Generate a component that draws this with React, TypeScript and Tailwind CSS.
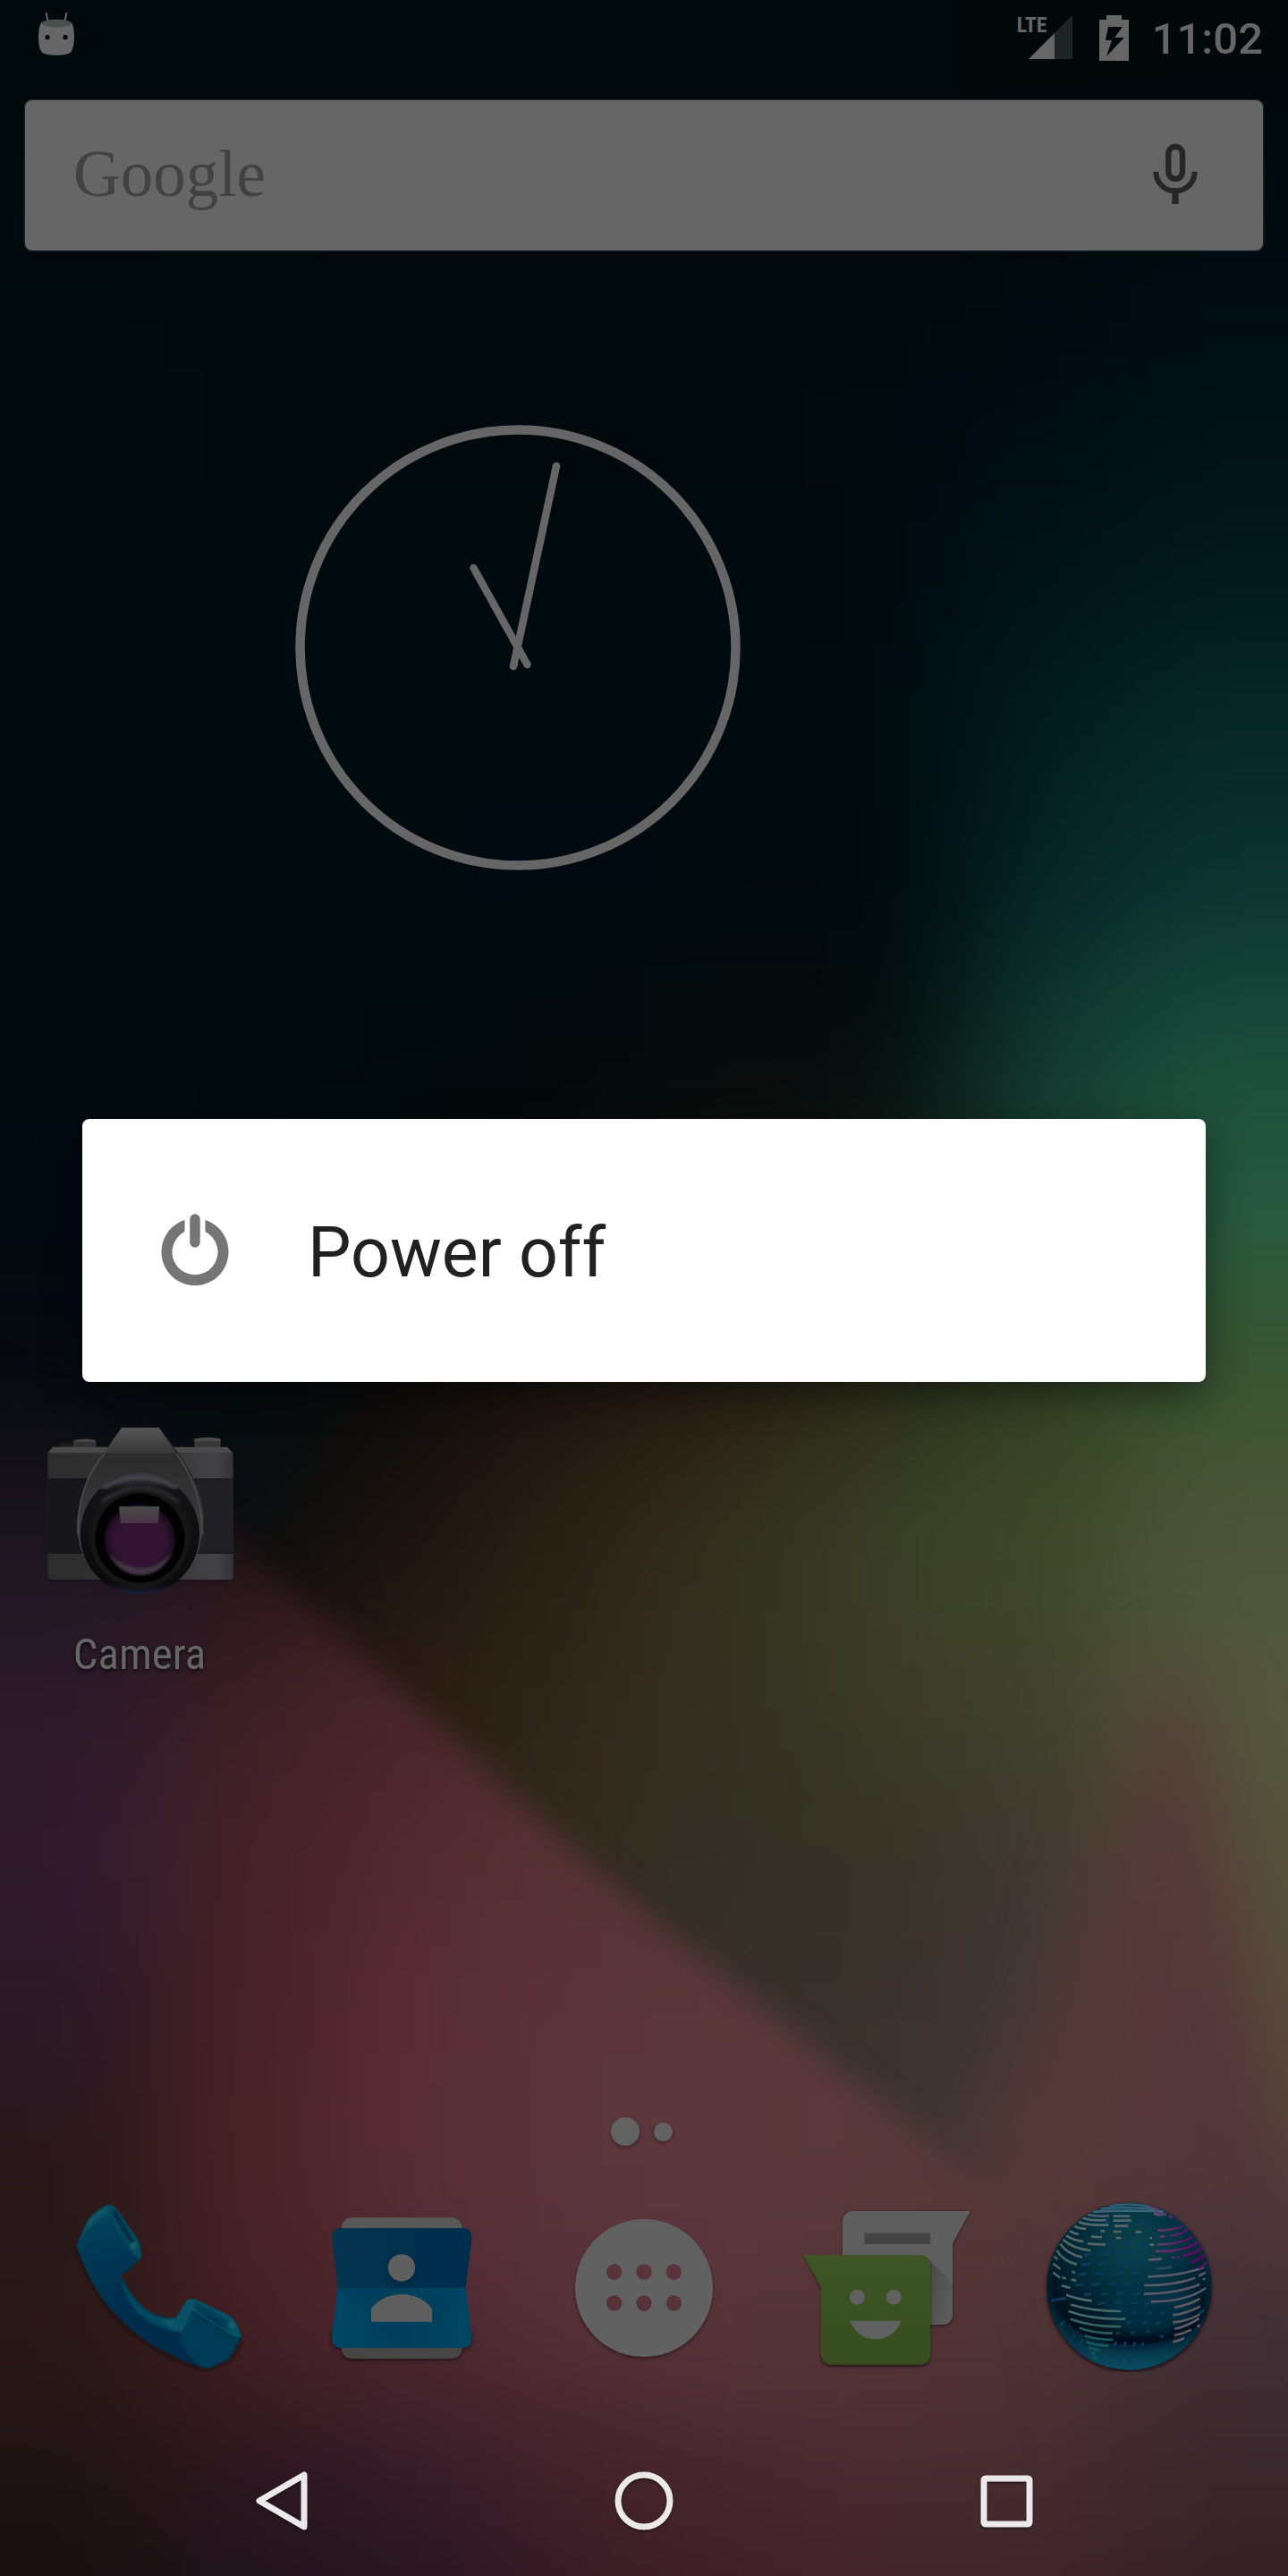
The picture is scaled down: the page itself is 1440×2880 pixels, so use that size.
import React from "react";

const CELL = 180;

/* Colour fields of the wallpaper: one row per 180 units, eight columns. */
const NIGHT_FIELD = [
  ["#00090b", "#00090b", "#00090b", "#00090b", "#00090b", "#00090b", "#00080a", "#00080a"],
  ["#000a0e", "#000a0d", "#00090c", "#00090b", "#00090b", "#00090c", "#000a0e", "#000b10"],
  ["#000b10", "#000a0e", "#000a0e", "#000a0d", "#000a0e", "#000a0f", "#000b12", "#010f16"],
  ["#000b10", "#000b0f", "#000b0f", "#000b0f", "#000b0f", "#000a0e", "#011217", "#03191d"],
  ["#000b10", "#000b10", "#000b0f", "#000b0f", "#000b0f", "#000a0e", "#031d20", "#062728"],
  ["#000b10", "#000b10", "#000b10", "#000a10", "#000a0f", "#00090c", "#062626", "#0c3430"],
  ["#000b10", "#000b10", "#000a0e", "#020a0c", "#050b0b", "#040b0c", "#113a31", "#1b4c3b"],
  ["#000a10", "#000a0e", "#030a0b", "#0a0b0b", "#11110e", "#131c14", "#1e4331", "#275a40"],
  ["#06090f", "#010a0c", "#0c0a0a", "#1d120e", "#261b12", "#2c2d1a", "#2f3f22", "#39532f"],
  ["#1a1420", "#080c0e", "#1c130e", "#2a2015", "#33301f", "#3a3f27", "#3f482a", "#4b553a"],
  ["#1a1420", "#20140f", "#291b13", "#2f2619", "#343122", "#3a3b27", "#41422d", "#55583f"],
  ["#2a2018", "#2a2018", "#2b2017", "#31291e", "#343026", "#373327", "#3f3832", "#55523b"],
  ["#2a2018", "#2a2018", "#2b2017", "#352c25", "#38302b", "#39322c", "#433634", "#554b3b"],
  ["#2a2018", "#2a2018", "#2b2017", "#352c25", "#3c332f", "#3f352f", "#4a3936", "#544638"],
  ["#2a2018", "#2a2018", "#2b2017", "#352c25", "#453735", "#4a3634", "#4a3435", "#3c3035"],
  ["#1a1114", "#20141c", "#25151d", "#381b24", "#42222a", "#452a2e", "#432a2e", "#35252a"],
  ["#170e10", "#1b1118", "#20141c", "#321922", "#3b1b23", "#3d2025", "#3a1e24", "#2f1b20"],
];

const ROSE_FIELD = [
  ["#06090f", "#010a0c", "#0c0a0a", "#1d120e", "#261b12", "#2c2d1a", "#43412f", "#4a4a34"],
  ["#1b151f", "#1c1114", "#321a19", "#3a2320", "#3a2a20", "#443b2d", "#474130", "#4e4b38"],
  ["#2b1a2a", "#3b1f24", "#48252a", "#4c2b2c", "#4c302c", "#4c3a34", "#4b3d33", "#534439"],
  ["#311c30", "#432126", "#53292f", "#563234", "#553436", "#553a36", "#503735", "#563c3a"],
  ["#2a1926", "#472124", "#592b34", "#5b343b", "#5b373a", "#5a393b", "#553836", "#56383a"],
  ["#271719", "#4a2224", "#582d36", "#5b363d", "#5c393d", "#5a393b", "#573937", "#52363a"],
  ["#281816", "#421f24", "#4c2631", "#552f38", "#56343a", "#533437", "#4e3234", "#403036"],
  ["#1d1212", "#27161e", "#301a24", "#3e1f29", "#45252d", "#482a2f", "#462a2f", "#38262b"],
  ["#170e10", "#1b1118", "#20141c", "#321922", "#3b1b23", "#3d2025", "#3a1e24", "#2f1b20"],
];

function ColourField({ rows, firstRow }: { rows: string[][]; firstRow: number }) {
  return (
    <g filter="url(#field-blur)">
      {rows.map((row, r) =>
        row.map((fill, c) => {
          const left = c === 0 ? -400 : c * CELL;
          const right = c === row.length - 1 ? 1840 : (c + 1) * CELL + 1;
          const top = firstRow + r === 0 ? -400 : (firstRow + r) * CELL;
          const bottom = r === rows.length - 1 ? 3400 : (firstRow + r + 1) * CELL + 1;
          return <rect key={`${r}-${c}`} x={left} y={top} width={right - left} height={bottom - top} fill={fill} />;
        })
      )}
    </g>
  );
}

function Wallpaper() {
  return (
    <svg
      aria-hidden="true"
      className="absolute inset-0 h-full w-full"
      viewBox="0 0 1440 2880"
      preserveAspectRatio="none"
    >
      <defs>
        <filter id="field-blur" filterUnits="userSpaceOnUse" x="-400" y="-400" width="2240" height="3800" colorInterpolationFilters="sRGB">
          <feGaussianBlur stdDeviation="75" />
        </filter>
        <filter id="edge-blur" filterUnits="userSpaceOnUse" x="-600" y="600" width="2640" height="2900">
          <feGaussianBlur stdDeviation="16" />
        </filter>
        <filter id="soft-edge-blur" filterUnits="userSpaceOnUse" x="-600" y="600" width="2640" height="2900">
          <feGaussianBlur stdDeviation="38" />
        </filter>
        <mask id="rose-mask" maskUnits="userSpaceOnUse" x="-400" y="1000" width="2240" height="2200">
          <polygon filter="url(#edge-blur)" fill="#fff" points="-500,1300 40,1560 230,1690 700,2120 1130,2470 1200,3300 -500,3300" />
          <polygon filter="url(#soft-edge-blur)" fill="#fff" points="1080,2500 1170,2280 1300,1830 1350,1900 1425,2380 1560,2800 1560,3300 1080,3300" />
        </mask>
      </defs>
      <ColourField rows={NIGHT_FIELD} firstRow={0} />
      <g mask="url(#rose-mask)">
        <ColourField rows={ROSE_FIELD} firstRow={8} />
      </g>
    </svg>
  );
}

function StatusBar() {
  return (
    <header className="flex h-[84px] items-center justify-between pl-[42px] pr-[28px] text-[#666666]">
      <svg className="mb-[8px] h-[50px] w-[42px]" viewBox="126 40 126 150" role="img" aria-label="Android debugging">
        <path d="M155 46 L161 74 M223 46 L217 74" stroke="#666" strokeWidth="6" strokeLinecap="round" />
        <path d="M139 76 Q189 56 239 76 Q249 90 249 126 Q248 160 239 174 Q230 186 189 186 Q148 186 139 174 Q129 160 129 126 Q129 90 139 76Z" fill="#666" />
        <ellipse cx="189" cy="79" rx="50" ry="13" fill="#4d4f4f" />
        <circle cx="159" cy="126" r="8" fill="#00090b" />
        <circle cx="219" cy="126" r="8" fill="#00090b" />
      </svg>
      <div className="flex items-center">
        <div className="relative h-[50px] w-[60px]">
          <span className="absolute -left-[2px] -top-px font-['Roboto_Condensed','Liberation_Sans_Narrow','Roboto',sans-serif] text-[24px] font-bold leading-[24px]">
            LTE
          </span>
          <svg className="ml-auto h-[50px] w-[49px]" viewBox="0 0 49 50" role="img" aria-label="Mobile signal">
            <path d="M49 0V49H29V20Z" fill="#1f2527" />
            <path d="M29 20V49H0Z" fill="#666" />
          </svg>
        </div>
        <svg className="ml-[30px] h-[51px] w-[33px]" viewBox="0 0 33 51" role="img" aria-label="Battery charging">
          <path fillRule="evenodd" fill="#666" d="M8 0H25V5H33V51H0V5H8ZM10 13L7 28H14L8 46L28 25H17L26 13Z" />
        </svg>
        <time className="ml-[26px] pt-[4px] font-['Roboto',sans-serif] text-[49px] font-medium leading-[56px]">11:02</time>
      </div>
    </header>
  );
}

function SearchBar() {
  return (
    <div className="mx-[28px] mt-[28px] flex h-[168px] items-center justify-between rounded-[8px] bg-[#666666] shadow-[0_0_2px_1px_rgba(60,66,68,0.5)]">
      <button
        type="button"
        aria-label="Google search"
        className="h-full flex-1 pb-[2px] pl-[54px] text-left font-['Liberation_Serif',serif] text-[73px] leading-[80px] text-[#424242]"
      >
        Google
      </button>
      <button type="button" aria-label="Voice search" className="mr-[66px] flex h-full items-center px-[6px] pb-[4px]">
        <svg className="h-[68px] w-[52px]" viewBox="624 480 156 204" fill="none" stroke="#262626">
          <rect x="679" y="492" width="47" height="108" rx="23.5" strokeWidth="19" />
          <path d="M637 576C637 613 666 640 702 640S767 613 767 576" strokeWidth="18" />
          <path d="M702 640V684" strokeWidth="22" />
        </svg>
      </button>
    </div>
  );
}

function ClockWidget() {
  return (
    <svg className="ml-[329px] mt-[194px] h-[500px] w-[500px]" viewBox="0 0 500 500" role="img" aria-label="Clock, 11:02" fill="none" stroke="#666" strokeLinecap="round">
      <circle cx="250" cy="250" r="243.5" strokeWidth="10.5" />
      <path d="M245 271L293 47" strokeWidth="8.5" />
      <path d="M260.5 269L200.5 161" strokeWidth="8.5" />
    </svg>
  );
}

function CameraIcon() {
  return (
    <svg className="h-[193px] w-[213px]" viewBox="150 100 639 579" aria-hidden="true">
      <defs>
        <linearGradient id="cam-top" x1="0" y1="0" x2="0" y2="1">
          <stop offset="0" stopColor="#565656" />
          <stop offset="1" stopColor="#373737" />
        </linearGradient>
        <linearGradient id="cam-body" x1="0" y1="0" x2="1" y2="0">
          <stop offset="0" stopColor="#2c2c2c" />
          <stop offset="0.6" stopColor="#343436" />
          <stop offset="0.9" stopColor="#434346" />
          <stop offset="1" stopColor="#333335" />
        </linearGradient>
        <linearGradient id="cam-ridge" x1="0" y1="0" x2="0" y2="1">
          <stop offset="0" stopColor="#262626" />
          <stop offset="0.35" stopColor="#2e2e2e" />
          <stop offset="1" stopColor="#444444" />
        </linearGradient>
        <linearGradient id="cam-ring" x1="0" y1="0" x2="0" y2="1">
          <stop offset="0" stopColor="#3c3c42" />
          <stop offset="0.14" stopColor="#141416" />
          <stop offset="0.9" stopColor="#0a0a0b" />
          <stop offset="1" stopColor="#1c1f38" />
        </linearGradient>
        <radialGradient id="cam-glass">
          <stop offset="0" stopColor="#351332" />
          <stop offset="0.75" stopColor="#311431" />
          <stop offset="1" stopColor="#150a18" />
        </radialGradient>
        <linearGradient id="cam-flash" x1="0" y1="0" x2="0" y2="1">
          <stop offset="0" stopColor="#4a4a48" />
          <stop offset="1" stopColor="#4a3448" />
        </linearGradient>
        <filter id="cam-soft"><feGaussianBlur stdDeviation="5" /></filter>
      </defs>
      <rect x="165" y="590" width="610" height="34" rx="10" fill="#08060c" opacity="0.5" filter="url(#cam-soft)" />
      <path d="M200 165Q222 152 245 165V190H200Z" fill="#1c1c1c" />
      <path d="M245 152Q283 142 322 152V190H245Z" fill="#333" />
      <path d="M252 151Q283 144 318 151V157H252Z" fill="#434343" />
      <path d="M652 147Q696 137 740 147V185H652Z" fill="#363636" />
      <path d="M652 147Q696 137 740 147V155H652Z" fill="#4a4a4a" />
      <path d="M178 176H762L782 196V612Q780 620 766 620H172Q160 618 160 606V196Z" fill="url(#cam-body)" />
      <path d="M178 174H762L780 194H160Z" fill="#4a4a4a" />
      <rect x="160" y="282" width="621" height="248" fill="#17171a" />
      <rect x="660" y="282" width="121" height="248" fill="#212025" />
      <path d="M160 530H781M160 282H781" stroke="#101012" strokeWidth="3" />
      <path d="M408 110H534L572 160Q668 270 682 400Q684 470 660 540H280Q250 470 260 400Q280 270 350 200L370 165Z" fill="url(#cam-ridge)" />
      <path d="M408 110H534L590 196H348Q366 172 378 150Z" fill="url(#cam-top)" />
      <path d="M350 198Q258 300 262 470M592 198Q676 310 680 470" fill="none" stroke="#4a4a4a" strokeWidth="5" />
      <ellipse cx="469" cy="466" rx="200" ry="204" fill="url(#cam-ring)" />
      <path d="M345 312Q469 240 593 312" fill="none" stroke="#44444c" strokeWidth="14" filter="url(#cam-soft)" />
      <circle cx="470" cy="472" r="170" fill="#151515" />
      <path d="M340 360Q469 262 600 360" fill="none" stroke="#2b2b2e" strokeWidth="12" filter="url(#cam-soft)" />
      <circle cx="469" cy="480" r="150" fill="#020202" />
      <path d="M304 500A166 166 0 0 0 634 500A166 150 0 0 1 304 500Z" fill="#151515" />
      <circle cx="469" cy="485" r="119" fill="url(#cam-glass)" />
      <path d="M366 530Q400 606 480 604Q550 596 578 522Q540 575 480 580Q410 580 366 530Z" fill="#4b3f4e" opacity="0.8" filter="url(#cam-soft)" />
      <path d="M399 374H535L530 430H405Z" fill="url(#cam-flash)" />
    </svg>
  );
}

function PhoneIcon() {
  return (
    <svg className="h-[192px] w-[192px]" viewBox="69 60 576 576" aria-hidden="true">
      <defs>
        <linearGradient id="ph-body" x1="0.1" y1="0.1" x2="0.6" y2="1">
          <stop offset="0" stopColor="#004058" />
          <stop offset="0.5" stopColor="#002e4c" />
          <stop offset="1" stopColor="#002a48" />
        </linearGradient>
        <linearGradient id="ph-ear" x1="0" y1="0" x2="0.2" y2="1">
          <stop offset="0" stopColor="#00465c" />
          <stop offset="1" stopColor="#003350" />
        </linearGradient>
        <filter id="ph-shadow" x="-10%" y="-10%" width="120%" height="120%"><feGaussianBlur stdDeviation="5" /></filter>
        <filter id="ph-soft"><feGaussianBlur stdDeviation="4" /></filter>
      </defs>
      <path d="M79 216Q150 400 240 480Q350 580 508 630L590 600L636 530" fill="none" stroke="#140a0c" strokeWidth="10" opacity="0.7" filter="url(#ph-shadow)" />
      <path d="M79 212L120 125Q150 92 186 75Q200 73 212 84L284 190Q302 226 294 258L228 312Q256 380 310 425Q350 455 412 456L445 402Q460 384 482 393L590 446Q618 466 632 520L590 592L520 624Q480 622 350 555Q220 475 150 365Q112 306 79 212Z" fill="url(#ph-body)" />
      <path d="M79 212L120 125Q150 92 186 75L192 104L262 222Q280 255 262 290L228 312Q170 320 130 290Q98 255 79 212Z" fill="url(#ph-ear)" />
      <path d="M88 196L120 125Q150 92 186 75L190 98Q140 122 122 150Z" fill="#0a5464" filter="url(#ph-soft)" />
      <path d="M124 150Q150 122 190 104L262 222" fill="none" stroke="#0d5968" strokeWidth="5" filter="url(#ph-soft)" />
      <path d="M188 78Q204 74 214 88L284 190Q302 226 294 258L270 240L192 106Z" fill="#064a5c" />
      <path d="M200 92Q210 92 220 108L268 190Q276 206 270 220L214 126Q200 106 200 92Z" fill="#02283f" filter="url(#ph-soft)" />
      <path d="M220 138L232 130M228 152L240 144M236 166L248 158M244 180L256 172" stroke="#083a4a" strokeWidth="4" />
      <circle cx="270" cy="212" r="12" fill="#14616f" filter="url(#ph-soft)" />
      <path d="M228 316Q256 384 312 428Q356 460 412 458L420 500Q330 488 280 430Q232 374 228 316Z" fill="#054a60" filter="url(#ph-soft)" />
      <path d="M362 458L412 458L418 500Q384 488 362 458Z" fill="#0a5668" filter="url(#ph-soft)" />
      <path d="M416 450L445 402Q460 384 470 395L466 430L430 505Q410 500 412 456Z" fill="#0a5064" />
      <path d="M462 432L610 522Q626 526 632 518L590 592L520 624Q450 600 424 520Z" fill="#003a54" filter="url(#ph-soft)" />
      <path d="M462 392Q472 388 482 393L590 446Q618 466 632 516Q626 526 606 516L466 430Z" fill="#075065" />
      <path d="M476 402L520 422L596 470L604 500L552 480L480 432Z" fill="#043d55" filter="url(#ph-soft)" />
      <path d="M516 442L526 460M530 448L540 468M544 456L554 476M558 464L568 484" stroke="#02304a" strokeWidth="5" />
      <circle cx="600" cy="480" r="13" fill="#176270" filter="url(#ph-soft)" />
      <path d="M464 396V432L432 498" fill="none" stroke="#0d6475" strokeWidth="5" filter="url(#ph-soft)" />
    </svg>
  );
}

function ContactsIcon() {
  return (
    <svg className="h-[192px] w-[192px]" viewBox="39 60 576 576" aria-hidden="true">
      <defs>
        <linearGradient id="ct-top" x1="0" y1="0" x2="1" y2="0">
          <stop offset="0" stopColor="#05344e" />
          <stop offset="1" stopColor="#002d4c" />
        </linearGradient>
        <linearGradient id="ct-bottom" x1="0" y1="0" x2="1" y2="0">
          <stop offset="0" stopColor="#004664" />
          <stop offset="0.5" stopColor="#00405c" />
          <stop offset="1" stopColor="#004562" />
        </linearGradient>
        <linearGradient id="ct-shade" x1="0" y1="0" x2="1" y2="0.4">
          <stop offset="0" stopColor="#003b56" stopOpacity="0.5" />
          <stop offset="1" stopColor="#003b56" stopOpacity="0" />
        </linearGradient>
        <filter id="ct-shadow" x="-10%" y="-10%" width="120%" height="125%"><feGaussianBlur stdDeviation="6" /></filter>
      </defs>
      <path d="M92 500H563V535Q560 560 530 562V570Q520 597 495 597H160Q134 597 126 570V562Q92 555 92 535Z" fill="#000" opacity="0.5" filter="url(#ct-shadow)" />
      <rect x="126" y="118" width="403" height="472" rx="34" fill="#595959" />
      <path d="M126 550H529Q529 590 495 590H160Q126 590 126 550Z" fill="#464646" />
      <path d="M120 153H536Q564 156 563 186L542 354H113L92 186Q92 156 120 153Z" fill="url(#ct-top)" />
      <path d="M113 354H542L563 522Q562 553 534 555H122Q92 552 92 522Z" fill="url(#ct-bottom)" />
      <path d="M113 354L305 555H500L542 354Z" fill="url(#ct-shade)" />
      <ellipse cx="328" cy="300" rx="54" ry="52" fill="#00223a" opacity="0.35" filter="url(#ct-shadow)" />
      <circle cx="327" cy="286" r="45.5" fill="#5f5f5f" />
      <path d="M225 467V424Q262 376 327 375Q394 376 429 424V467Z" fill="#5f5f5f" />
    </svg>
  );
}

function AppsIcon() {
  return (
    <svg className="h-[192px] w-[192px]" viewBox="12 330 576 576" aria-hidden="true">
      <defs>
        <filter id="ap-shadow" x="-10%" y="-10%" width="120%" height="120%"><feGaussianBlur stdDeviation="5" /></filter>
        <mask id="ap-holes">
          <rect x="12" y="330" width="576" height="576" fill="#fff" />
          {[570, 675].map((cy) => [200, 300, 400].map((cx) => <circle key={`${cx}-${cy}`} cx={cx} cy={cy} r="26" fill="#000" />))}
        </mask>
      </defs>
      <g mask="url(#ap-holes)">
        <circle cx="300" cy="630" r="231" fill="#14080c" opacity="0.5" filter="url(#ap-shadow)" />
        <circle cx="300" cy="624" r="231" fill="#616161" />
      </g>
    </svg>
  );
}

function MessagesIcon() {
  return (
    <svg className="h-[192px] w-[192px]" viewBox="45 60 576 576" aria-hidden="true">
      <defs>
        <linearGradient id="ms-green" x1="0" y1="0" x2="0" y2="1">
          <stop offset="0" stopColor="#3e5425" />
          <stop offset="0.4" stopColor="#3a5122" />
          <stop offset="1" stopColor="#384e1f" />
        </linearGradient>
        <linearGradient id="ms-fold" x1="0" y1="0" x2="1" y2="0.6">
          <stop offset="0" stopColor="#484848" />
          <stop offset="1" stopColor="#5c5c5c" />
        </linearGradient>
        <filter id="ms-shadow" x="-10%" y="-10%" width="120%" height="120%"><feGaussianBlur stdDeviation="5" /></filter>
      </defs>
      <path d="M186 130Q188 98 220 96H614L556 212V444Q552 484 520 484H186Z" fill="#000" opacity="0.4" filter="url(#ms-shadow)" />
      <path d="M186 132Q188 98 220 96H614L555 205V440Q552 476 520 477H186Z" fill="#5f5f5f" />
      <path d="M472 254L555 336V440Q552 476 520 477H472Z" fill="url(#ms-fold)" />
      <rect x="259" y="170" width="222" height="37" fill="#444" />
      <path d="M56 250H446Q480 252 481 282V582Q478 618 446 618H148Q116 616 113 582V356Z" fill="#000" opacity="0.5" filter="url(#ms-shadow)" />
      <path d="M53 243H446Q480 246 481 278V576Q478 610 446 611H148Q116 608 113 576V350Z" fill="url(#ms-green)" />
      <circle cx="235" cy="385" r="25.5" fill="#616161" />
      <circle cx="358" cy="385" r="25.5" fill="#616161" />
      <path d="M210 464H383Q356 525 297 526Q238 525 210 464Z" fill="#616161" />
    </svg>
  );
}

const OCEAN_DASHES: Array<[number, number, number]> = [
  [305, 207, 30], [360, 206, 30], [415, 210, 26], [230, 241, 30], [288, 240, 30], [348, 239, 32], [405, 238, 26],
  [222, 274, 30], [280, 272, 30], [342, 270, 30], [398, 270, 28], [210, 308, 28], [268, 306, 30], [330, 304, 30],
  [386, 303, 28], [200, 344, 28], [255, 341, 30], [310, 339, 30], [366, 338, 26], [228, 376, 24], [284, 374, 24],
  [338, 372, 24], [392, 374, 20], [276, 405, 24], [330, 403, 22], [382, 403, 22], [428, 407, 18], [384, 434, 14],
  [436, 438, 14], [480, 438, 14], [368, 468, 14], [420, 470, 14], [466, 470, 14], [330, 505, 14], [380, 504, 14],
  [430, 500, 12], [476, 516, 12],
];

const LAND_LINES: Array<[string, string]> = [
  ["M300 78Q367 68 440 80", "#315f78"],
  ["M272 88Q360 80 456 90", "#315f78"],
  ["M246 98Q360 92 482 98", "#3c657a"],
  ["M228 108Q262 116 300 112M314 113H370M450 104Q470 112 492 106", "#50616c"],
  ["M212 120Q244 130 290 126M314 128H374", "#54666e"],
  ["M198 132Q226 146 298 142M318 146H364", "#546769"],
  ["M184 146Q200 156 222 155M272 163H286M314 165H342M388 166H408", "#566665"],
  ["M168 162Q180 172 198 174M240 181Q256 184 276 183M322 186H340M436 186H444", "#566665"],
  ["M156 178Q180 194 214 198M228 205Q256 208 288 208M436 209H452", "#566665"],
  ["M146 192Q178 222 238 228", "#566665"],
  ["M136 206Q160 240 210 251", "#536661"],
  ["M124 228Q146 264 192 275", "#48625e"],
  ["M116 248L128 258M112 272L136 290M176 298L186 304M112 302L136 320M142 319L156 322M172 326L190 329", "#48625e"],
  ["M140 346L170 354M156 377Q196 392 242 397", "#4d6769"],
  ["M172 410Q250 432 340 432", "#446866"],
  ["M164 432Q240 460 355 458", "#446866"],
  ["M170 458Q250 486 340 483", "#356462"],
  ["M200 488Q254 506 312 506", "#205c59"],
  ["M218 514Q260 528 314 528M224 534Q256 548 298 547", "#1c5856"],
  ["M232 552Q252 564 270 562M240 570L254 576M244 584L262 592", "#0c5452"],
  ["M432 259Q456 259 476 256", "#5e5a66"],
  ["M460 288Q486 289 510 284", "#27495a"],
  ["M430 316Q540 314 618 284", "#555a6a"],
  ["M417 345Q520 345 588 320M600 314L624 302", "#5d5868"],
  ["M417 374Q530 372 604 342M614 326L622 322", "#5d5868"],
  ["M440 400Q560 400 624 354", "#5d5868"],
  ["M518 419Q566 412 604 390M514 445Q566 438 606 415M514 470Q566 464 604 442", "#5e595e"],
  ["M520 491Q554 486 602 456M518 513Q548 508 576 494M514 535Q532 532 552 522M596 484L604 478", "#5e5962"],
];

const AURORA_LINES = [
  "M430 80Q450 90 470 90",
  "M450 98Q472 110 490 104",
  "M500 112L514 118",
  "M462 161Q520 160 548 146",
  "M470 181H488M504 178Q540 178 570 154",
  "M462 208Q540 208 584 180",
  "M456 231Q560 232 606 196",
  "M508 252H522M530 250H538M546 246Q590 240 614 216",
  "M576 268Q606 258 620 242",
  "M600 288Q618 278 628 268",
];

function BrowserIcon() {
  return (
    <svg className="h-[192px] w-[192px]" viewBox="78 60 576 576" aria-hidden="true">
      <defs>
        <radialGradient id="br-sea" gradientUnits="userSpaceOnUse" cx="390" cy="210" r="330">
          <stop offset="0" stopColor="#0b434b" />
          <stop offset="0.4" stopColor="#043443" />
          <stop offset="0.75" stopColor="#02202f" />
          <stop offset="1" stopColor="#00101c" />
        </radialGradient>
        <linearGradient id="br-glow" x1="0" y1="0" x2="0" y2="1">
          <stop offset="0" stopColor="#022c44" stopOpacity="0" />
          <stop offset="1" stopColor="#0e5468" />
        </linearGradient>
        <linearGradient id="br-aurora" gradientUnits="userSpaceOnUse" x1="430" y1="0" x2="580" y2="0">
          <stop offset="0" stopColor="#5c4b6b" />
          <stop offset="1" stopColor="#5c0a62" />
        </linearGradient>
        <clipPath id="br-clip"><ellipse cx="367" cy="349" rx="275" ry="280" /></clipPath>
        <filter id="br-shadow" x="-10%" y="-10%" width="120%" height="120%"><feGaussianBlur stdDeviation="6" /></filter>
        <filter id="br-soft" x="-40%" y="-40%" width="180%" height="180%"><feGaussianBlur stdDeviation="18" /></filter>
      </defs>
      <ellipse cx="367" cy="354" rx="276" ry="281" fill="#0c0608" opacity="0.8" filter="url(#br-shadow)" />
      <g clipPath="url(#br-clip)">
        <rect x="80" y="60" width="576" height="580" fill="url(#br-sea)" />
        <ellipse cx="440" cy="420" rx="150" ry="90" fill="#03364a" opacity="0.7" filter="url(#br-soft)" />
        <path d="M100 360Q150 540 367 545Q590 540 640 420L650 640H90Z" fill="url(#br-glow)" />
        <path d="M150 470Q250 540 400 530Q560 520 620 420L600 480Q520 550 380 552Q230 552 150 470Z" fill="#000c1c" opacity="0.7" filter="url(#br-soft)" />
        <ellipse cx="367" cy="349" rx="270" ry="275" fill="none" stroke="#0a4460" strokeWidth="8" opacity="0.6" filter="url(#br-shadow)" />
        <g stroke="#0a3a5a" strokeWidth="9" fill="none">
          {OCEAN_DASHES.map(([x, y, w]) => (
            <path key={`${x}-${y}`} d={`M${x - w / 2} ${y + 2}L${x + w / 2} ${y - 2}`} />
          ))}
          <path d="M106 396L156 388M134 480L150 468M198 544L212 526M318 550L324 534M350 550L356 534M382 550L388 536M410 548L416 536M336 585V604M368 582V610M176 524L184 514M274 130H302M406 134L438 128M600 440L618 428" />
        </g>
        <g strokeWidth="8" fill="none">
          {LAND_LINES.map(([d, stroke]) => (
            <path key={d} d={d} stroke={stroke} />
          ))}
        </g>
        <g strokeWidth="8" fill="none" stroke="url(#br-aurora)">
          {AURORA_LINES.map((d) => (
            <path key={d} d={d} />
          ))}
        </g>
      </g>
    </svg>
  );
}

const DOCK = [
  { name: "Phone", Icon: PhoneIcon },
  { name: "Contacts", Icon: ContactsIcon },
  { name: "Apps", Icon: AppsIcon },
  { name: "Messages", Icon: MessagesIcon },
  { name: "Browser", Icon: BrowserIcon },
];

function NavigationBar() {
  return (
    <nav className="relative grid h-[168px] grid-cols-3 px-[112px] drop-shadow-[0_2px_1px_rgba(0,0,0,0.4)]">
      <button type="button" aria-label="Back" className="flex items-center justify-center">
        <svg className="h-[72px] w-[72px]" viewBox="0 0 72 72" fill="none" stroke="#ebe9ea" strokeWidth="7" strokeLinejoin="round">
          <path d="M61 7V65L11 36Z" />
        </svg>
      </button>
      <button type="button" aria-label="Home" className="flex items-center justify-center">
        <svg className="h-[72px] w-[72px]" viewBox="0 0 72 72" fill="none" stroke="#ebe9ea" strokeWidth="7">
          <circle cx="36" cy="36" r="29" />
        </svg>
      </button>
      <button type="button" aria-label="Recent apps" className="flex items-center justify-center">
        <svg className="h-[72px] w-[72px]" viewBox="0 0 72 72" fill="none" stroke="#ebe9ea" strokeWidth="7">
          <rect x="11" y="11" width="51" height="51" rx="2" />
        </svg>
      </button>
    </nav>
  );
}

function PowerDialog() {
  return (
    <div className="absolute inset-x-0 bottom-[168px] top-[84px] flex items-center px-[92px]">
      <div role="dialog" aria-label="Power menu" className="w-full rounded-[8px] bg-white py-[28px] shadow-[0_14px_44px_rgba(0,0,0,0.45)]">
        <button type="button" className="flex h-[238px] w-full items-center gap-[84px] pl-[84px] text-left">
          <svg className="h-[84px] w-[84px]" viewBox="0 0 84 84" fill="none" aria-hidden="true">
            <path d="M30.500 8A37.500 37.500 0 1 0 53.500 8V21A25.500 25.500 0 1 1 30.500 21Z" fill="#757575" />
            <path d="M42 7V33" stroke="#757575" strokeWidth="11.500" strokeLinecap="round" />
          </svg>
          <span className="pt-[6px] font-['Roboto',sans-serif] text-[77px] leading-[90px] text-[#212121]">Power off</span>
        </button>
      </div>
    </div>
  );
}

export default function App() {
  return (
    <div className="relative isolate flex min-h-screen flex-col overflow-hidden bg-[#00090b]">
      <Wallpaper />
      <div className="relative flex flex-1 flex-col">
        <StatusBar />
        <SearchBar />
        <main className="flex flex-1 flex-col">
          <ClockWidget />
          <button type="button" className="ml-[28px] mt-[619px] flex w-[256px] flex-col items-center">
            <CameraIcon />
            <span className="mt-[34px] font-['Roboto_Condensed','Roboto',sans-serif] text-[49px] leading-[60px] text-[#666666] [text-shadow:0_2px_4px_rgba(0,0,0,0.8)]">
              Camera
            </span>
          </button>
        </main>
        <div className="flex items-center justify-center gap-[16px] pb-[61px] pr-[6px] pt-[20px]" role="group" aria-label="Home screen pages">
          <span className="h-[32px] w-[32px] rounded-full bg-[#626262] shadow-[0_2px_4px_rgba(0,0,0,0.35)]" />
          <span className="h-[21px] w-[21px] rounded-full bg-[#626262] shadow-[0_2px_4px_rgba(0,0,0,0.35)]" />
        </div>
        <div className="grid grid-cols-5 px-[43px] pb-[60px]">
          {DOCK.map(({ name, Icon }) => (
            <button key={name} type="button" aria-label={name} className="flex justify-center">
              <Icon />
            </button>
          ))}
        </div>
      </div>
      <NavigationBar />
      <PowerDialog />
    </div>
  );
}
